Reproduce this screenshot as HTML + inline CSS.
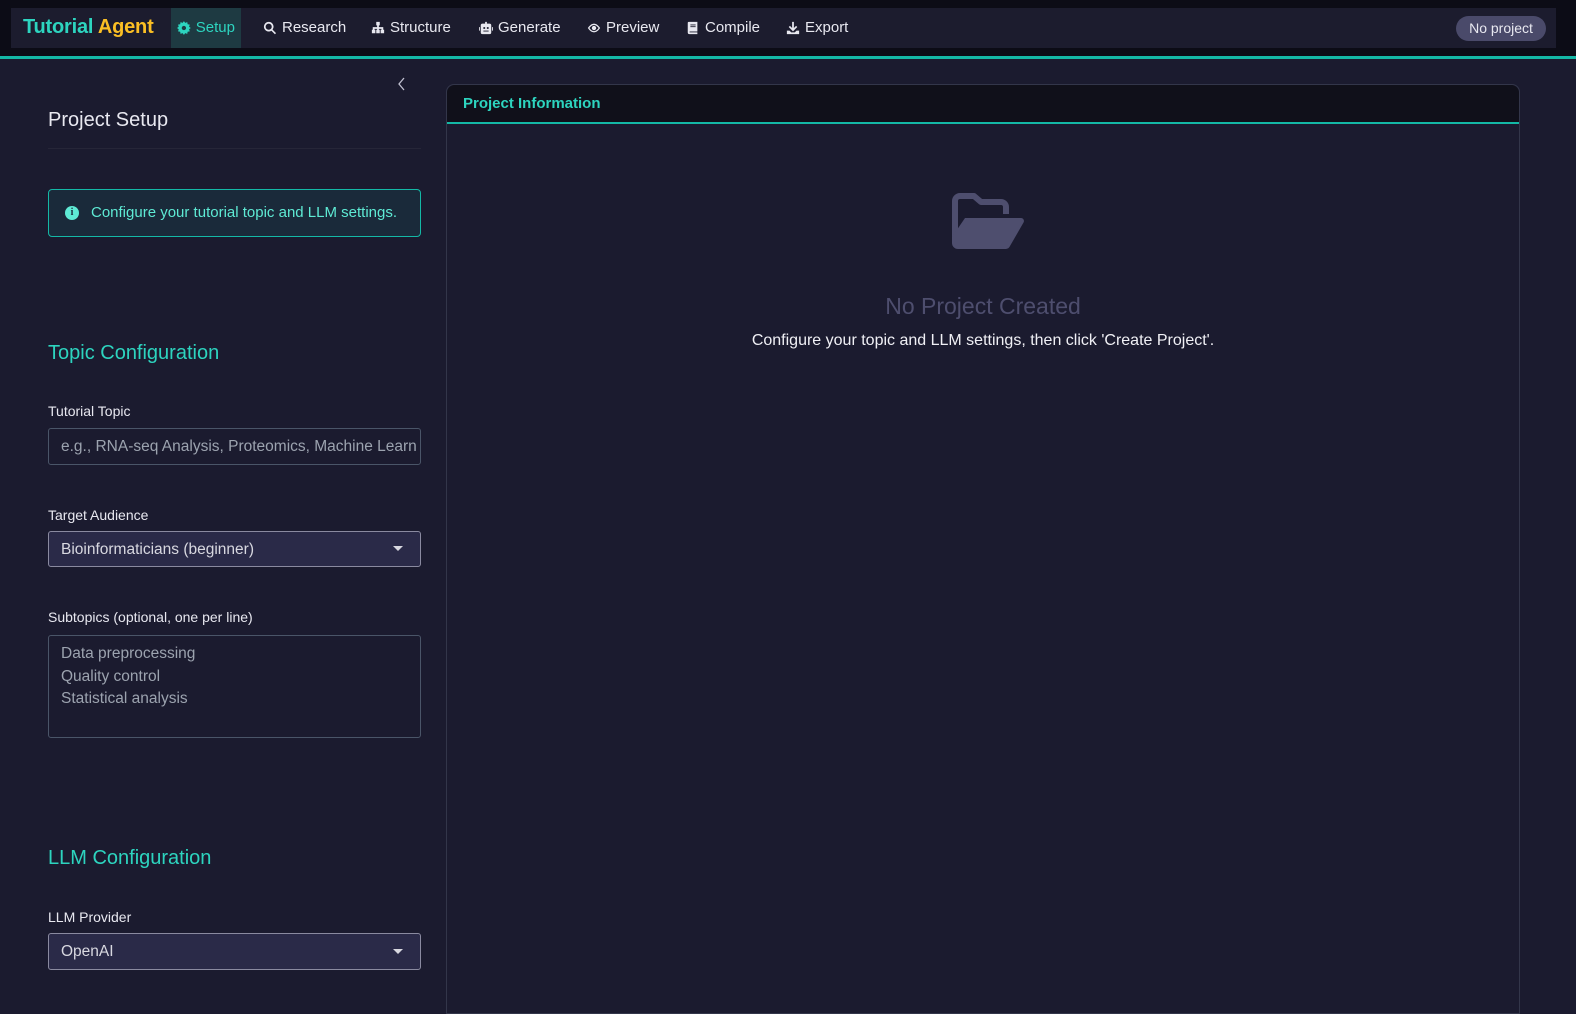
<!DOCTYPE html>
<html><head><meta charset="utf-8"><style>
*{box-sizing:border-box;margin:0;padding:0}
body{width:1576px;height:1000px;overflow:hidden;background:#1b1b2f;font-family:"Liberation Sans",sans-serif;color:#e8e8f0;position:relative}
.top{position:absolute;left:0;top:0;width:1576px;height:56px;background:#0c0c16}
.nav{position:absolute;left:11px;top:8px;width:1545px;height:40px;background:#1c1c2e}
.teal{position:absolute;left:0;top:56px;width:1576px;height:3px;background:#14b8a6}
.brand{position:absolute;left:12px;top:8px;font-size:20px;font-weight:bold;color:#2dd4bf;letter-spacing:-0.2px}
.brand span{color:#fbbf24}
.item{position:absolute;top:0;height:40px;line-height:40px;font-size:15px;color:#e8e8f0;display:flex;align-items:center;gap:5px}
.item svg{width:14px;height:14px;fill:currentColor}
.active{background:#1e3a42;color:#2dd4bf;padding:0 6px}
.badge{position:absolute;left:1456px;top:16px;height:25px;width:90px;text-align:center;border-radius:13px;background:#4a4a6a;color:#e8e8f0;font-size:14px;line-height:25px}
.lbl{position:absolute;left:48px;font-size:14px;color:#e8e8f0}
.h{position:absolute;left:48px;font-size:20px;color:#2dd4bf}
.box{position:absolute;left:48px;width:373px;border:1px solid #4a5568;border-radius:3px;font-size:15.5px;color:#9ca3af;padding-left:12px}
</style></head><body>
<div class="top"></div>
<div class="nav">
<div class="brand">Tutorial <span>Agent</span></div>
<div class="item active" style="left:160px;width:70px"><svg viewBox="0 0 16 16"><path d="M8 0l1.5 2 2.4-.8.4 2.5 2.5.4-.8 2.4L16 8l-2 1.5.8 2.4-2.5.4-.4 2.5-2.4-.8L8 16l-1.5-2-2.4.8-.4-2.5-2.5-.4.8-2.4L0 8l2-1.5-.8-2.4 2.5-.4.4-2.5 2.4.8z M8 5.5a2.5 2.5 0 100 5 2.5 2.5 0 000-5z" fill-rule="evenodd"/></svg>Setup</div>
<div class="item" style="left:252px"><svg viewBox="0 0 16 16"><path d="M6.5 1a5.5 5.5 0 014.4 8.8l4 4-1.3 1.3-4-4A5.5 5.5 0 116.5 1zm0 2a3.5 3.5 0 100 7 3.5 3.5 0 000-7z"/></svg>Research</div>
<div class="item" style="left:360px"><svg viewBox="0 0 16 16"><path d="M6 1h4v4H9v2h5v3h1v4h-4v-4h1V9H9v1h1v4H6v-4h1V9H4v1h1v4H1v-4h1V7h5V5H6z"/></svg>Structure</div>
<div class="item" style="left:468px"><svg viewBox="0 0 16 16"><path d="M7 1h2v2h3a2 2 0 012 2v8a2 2 0 01-2 2H4a2 2 0 01-2-2V5a2 2 0 012-2h3zM5 7v2h2V7zm4 0v2h2V7zM5 11v1h6v-1zM0 7h1v4H0zm15 0h1v4h-1z"/></svg>Generate</div>
<div class="item" style="left:576px"><svg viewBox="0 0 16 16"><path d="M8 3c4 0 7 5 7 5s-3 5-7 5-7-5-7-5 3-5 7-5zm0 1.5C5.5 4.5 3.4 7 2.8 8c.6 1 2.7 3.5 5.2 3.5s4.6-2.5 5.2-3.5C12.6 7 10.5 4.5 8 4.5zM8 5.5a2.5 2.5 0 110 5 2.5 2.5 0 010-5z"/></svg>Preview</div>
<div class="item" style="left:675px"><svg viewBox="0 0 16 16"><path d="M3 1h10v11H4.5a.5.5 0 000 1H13v2H4a2 2 0 01-2-2V2a1 1 0 011-1zm2 3v1h6V4zm0 2v1h6V6z"/></svg>Compile</div>
<div class="item" style="left:775px"><svg viewBox="0 0 16 16"><path d="M7 1h2v7l2.5-2.5 1.4 1.4L8 11.8 3.1 6.9l1.4-1.4L7 8zM1 11h3l2 2h4l2-2h3v4H1z"/></svg>Export</div>
</div>
<div class="badge">No project</div>
<div class="teal"></div>

<svg style="position:absolute;left:397px;top:77px" width="10" height="14" viewBox="0 0 10 14"><path d="M7 1L2 7l5 6" stroke="#c0c0d0" stroke-width="1.3" fill="none"/></svg>
<div style="position:absolute;left:48px;top:109px;font-size:20px;color:#e8e8f0">Project Setup</div>
<div style="position:absolute;left:48px;top:148px;width:373px;height:1px;background:#262638"></div>
<div style="position:absolute;left:48px;top:189px;width:373px;height:48px;border:1px solid #14b8a6;border-radius:4px;background:#1a2a3a;color:#5eead4;font-size:15px;line-height:46px;padding-left:42px">
<span style="position:absolute;left:16px;top:16px;width:14px;height:14px;border-radius:50%;background:#5eead4;color:#1a2a3a;font-size:10px;line-height:14px;text-align:center;font-weight:bold;font-family:'Liberation Serif',serif">i</span>Configure your tutorial topic and LLM settings.</div>

<div class="h" style="top:342px">Topic Configuration</div>
<div class="lbl" style="top:403px">Tutorial Topic</div>
<div class="box" style="top:428px;height:37px;line-height:35px;background:#1b1b2f;white-space:nowrap;overflow:hidden">e.g., RNA-seq Analysis, Proteomics, Machine Learn</div>
<div class="lbl" style="top:507px">Target Audience</div>
<div class="box" style="top:531px;height:36px;line-height:35px;background:#2a2a48;color:#d8d8e0;border-color:#8a8aa0">Bioinformaticians (beginner)<span style="position:absolute;right:17px;top:14px;border:5px solid transparent;border-top:5px solid #d8d8e0"></span></div>
<div class="lbl" style="top:609px">Subtopics (optional, one per line)</div>
<div class="box" style="top:635px;height:103px;line-height:22.5px;padding-top:7px;background:#1b1b2f">Data preprocessing<br>Quality control<br>Statistical analysis</div>

<div class="h" style="top:847px">LLM Configuration</div>
<div class="lbl" style="top:909px">LLM Provider</div>
<div class="box" style="top:933px;height:37px;line-height:36px;background:#2a2a48;color:#d8d8e0;border-color:#8a8aa0">OpenAI<span style="position:absolute;right:17px;top:15px;border:5px solid transparent;border-top:5px solid #d8d8e0"></span></div>

<div style="position:absolute;left:446px;top:84px;width:1074px;height:930px;border:1px solid #33364a;border-radius:8px 8px 0 0;background:#1b1b2f">
<div style="height:39px;background:#10101a;border-bottom:2px solid #14b8a6;border-radius:8px 8px 0 0;color:#2dd4bf;font-size:15px;font-weight:bold;line-height:38px;padding-left:16px">Project Information</div>
<svg style="position:absolute;left:505px;top:108px" width="72" height="57" viewBox="0 0 72 57"><path d="M3 48V8a5 5 0 015-5h14l7 6h20a5 5 0 015 5v7" stroke="#4e4e6e" stroke-width="6" fill="none" stroke-linejoin="round"/><path d="M13 25h56a3 3 0 012.6 4.4L58 53a5 5 0 01-4 3H6a6 6 0 01-6-6V44z" fill="#4e4e6e"/></svg>
<div style="position:absolute;left:0;width:100%;top:208px;text-align:center;font-size:23px;color:#4e4e6e">No Project Created</div>
<div style="position:absolute;left:0;width:100%;top:247px;text-align:center;font-size:16px;color:#f0f0f5">Configure your topic and LLM settings, then click 'Create Project'.</div>
</div>
</body></html>
